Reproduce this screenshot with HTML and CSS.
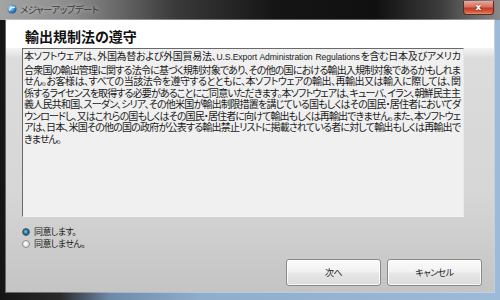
FILE: index.html
```html
<!DOCTYPE html>
<html lang="ja">
<head>
<meta charset="utf-8">
<title>メジャーアップデート</title>
<link rel="stylesheet" href="styles.css">
</head>
<body>
<div class="window">
  <div class="titlebar">
    <svg class="app-icon" width="10" height="10" viewBox="0 0 10 10">
      <defs>
        <radialGradient id="g" cx="35%" cy="35%" r="70%">
          <stop offset="0" stop-color="#bfe6ff"/>
          <stop offset="0.6" stop-color="#3d8fd0"/>
          <stop offset="1" stop-color="#1d4f8a"/>
        </radialGradient>
      </defs>
      <circle cx="5" cy="5" r="4.5" fill="url(#g)"/>
      <path d="M2.2 6.5 C3.5 3.2 6.5 2.6 8 3.6" stroke="#ffffff" stroke-width="1.2" fill="none"/>
    </svg>
    <span class="title-text">メジャーアップデート</span>
    <div class="close-btn">x</div>
  </div>
  <div class="client">
    <div class="header">
      <h1 class="heading">輸出規制法の遵守</h1>
    </div>
    <div class="body">
      <div class="textbox">
        <span class="line">本ソフトウェアは、外国為替および外国貿易法、<span class="latin">U.S.Export Administration Regulations</span>を含む日本及びアメリカ</span>
        <span class="line">合衆国の輸出管理に関する法令に基づく規制対象であり、その他の国における輸出入規制対象であるかもしれま</span>
        <span class="line">せん。お客様は、すべての当該法令を遵守するとともに、本ソフトウェアの輸出、再輸出又は輸入に際しては、関</span>
        <span class="line">係するライセンスを取得する必要があることにご同意いただきます。本ソフトウェアは、キューバ、イラン、朝鮮民主主</span>
        <span class="line">義人民共和国、スーダン、シリア、その他米国が輸出制限措置を講じている国もしくはその国民・居住者においてダ</span>
        <span class="line">ウンロードし、又はこれらの国もしくはその国民・居住者に向けて輸出もしくは再輸出できません。また、本ソフトウェ</span>
        <span class="line">アは、日本、米国その他の国の政府が公表する輸出禁止リストに掲載されている者に対して輸出もしくは再輸出で</span>
        <span class="line last">きません。</span>
      </div>
      <div class="options">
        <label class="option"><span class="radio checked"></span><span>同意します。</span></label>
        <label class="option"><span class="radio"></span><span>同意しません。</span></label>
      </div>
      <div class="buttons">
        <div class="btn">次へ</div>
        <div class="btn">キャンセル</div>
      </div>
    </div>
  </div>
</div>
</body>
</html>
```
FILE: styles.css
```css
html, body {
  margin: 0;
  padding: 0;
}
body {
  width: 500px;
  height: 300px;
  overflow: hidden;
  font-family: "Noto Sans CJK JP", sans-serif;
}
.window {
  width: 500px;
  height: 300px;
  display: flex;
  flex-direction: column;
  background: linear-gradient(to right, #151515 0%, #2a2a2a 12%, #6f8aa8 22%, #8fadcc 40%, #9dbad8 100%);
}
.titlebar {
  height: 20px;
  flex: none;
  display: flex;
  align-items: center;
  padding-left: 7px;
  background: linear-gradient(to right, #a4a4a4 0%, #8a8a8a 15%, #3a3a3a 35%, #151515 55%, #101010 75%, #3c3c3c 88%, #8a8a8a 100%);
}
.app-icon {
  flex: none;
  margin-right: 3px;
  margin-top: -2px;
}
.title-text {
  font-size: 9.5px;
  color: #3a3a3a;
  letter-spacing: -0.6px;
  font-feature-settings: "palt";
  text-shadow: 0 0 4px rgba(255,255,255,0.6);
  margin-top: -2px;
}
.close-btn {
  margin-left: auto;
  margin-right: 6px;
  align-self: flex-start;
  margin-top: 1px;
  width: 29px;
  height: 13px;
  border: 1px solid #5a2a22;
  border-top: none;
  border-radius: 0 0 4px 4px;
  background: linear-gradient(to bottom, #e9a99b 0%, #d77060 45%, #c23a28 55%, #d4603f 85%, #e89070 100%);
  color: #fff;
  font-family: "DejaVu Sans", sans-serif;
  font-weight: bold;
  font-size: 9px;
  line-height: 12px;
  text-align: center;
  text-shadow: 0 0 2px #6a1a10;
}
.client {
  flex: 1;
  margin: 0 6px 8px 6px;
  display: flex;
  flex-direction: column;
  background: linear-gradient(to bottom, #e6e6e6 0%, #d2d2d2 45%, #c0c0c0 100%);
  box-shadow: 0 0 0 1px rgba(255,255,255,0.35);
}
.header {
  height: 28px;
  flex: none;
  background: #ffffff;
  display: flex;
  align-items: center;
  padding-left: 19px;
}
.heading {
  margin: 4px 0 0 0;
  font-size: 14px;
  font-weight: bold;
  color: #111;
  letter-spacing: 0px;
  font-feature-settings: "palt";
}
.body {
  flex: 1;
  display: flex;
  flex-direction: column;
  padding: 0 30px 0 16px;
  background: linear-gradient(to bottom, #f4f4f4 0px, #dcdcdc 10px, #d6d6d6 60%, #c4c4c4 100%);
}
.textbox {
  height: 169px;
  flex: none;
  box-sizing: border-box;
  border-top: 1px solid #6a6a6a;
  border-left: 1px solid #6a6a6a;
  border-right: 1px solid #e8e8e8;
  border-bottom: 1px solid #f4f4f4;
  background: #f0f0f0;
  padding: 1px 3px 0 1px;
  font-size: 10px;
  line-height: 11.55px;
  color: #1a1a1a;
  font-feature-settings: "palt";
  letter-spacing: -1px;
}
.line {
  display: block;
  white-space: nowrap;
  text-align: justify;
  text-align-last: justify;
}
.line.last {
  text-align: left;
  text-align-last: left;
}
.latin {
  font-family: "Liberation Sans", sans-serif;
  font-size: 8.6px;
  letter-spacing: -0.1px;
}
.options {
  display: flex;
  flex-direction: column;
  gap: 3px;
  margin-top: 10px;
  padding-left: 0;
}
.option {
  display: flex;
  align-items: center;
  font-size: 9px;
  line-height: 9px;
  color: #222;
  letter-spacing: -0.6px;
  font-feature-settings: "palt";
}
.radio {
  width: 6px;
  height: 6px;
  border-radius: 50%;
  border: 1px solid #8c8c8c;
  background: radial-gradient(circle at 40% 40%, #ffffff 0%, #e4e4e4 60%, #c8c8c8 100%);
  margin-right: 4px;
  box-sizing: content-box;
}
.radio.checked {
  border-color: #4a5a66;
  background: radial-gradient(circle at 45% 45%, #7fd0f0 0%, #1e7aa8 45%, #134a6a 70%, #d8dde0 75%, #eaeaea 100%);
}
.buttons {
  display: flex;
  justify-content: flex-end;
  gap: 6px;
  margin-top: 11px;
  margin-right: -18px;
}
.btn {
  width: 95px;
  height: 27px;
  box-sizing: border-box;
  border: 1px solid #8a8a8a;
  border-radius: 3px;
  background: linear-gradient(to bottom, #fbfbfb 0%, #f2f2f2 45%, #e6e6e6 55%, #dcdcdc 100%);
  box-shadow: inset 0 0 0 1px rgba(255,255,255,0.8);
  display: flex;
  align-items: center;
  justify-content: center;
  font-size: 9px;
  color: #222;
  letter-spacing: -0.5px;
  font-feature-settings: "palt";
}
```
